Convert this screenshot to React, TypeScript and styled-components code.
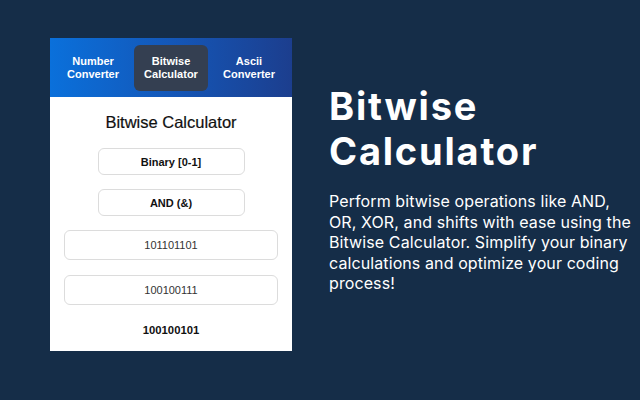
import React from "react";
import styled, { createGlobalStyle } from "styled-components";

const GlobalStyle = createGlobalStyle`
  html, body {
    margin: 0;
    padding: 0;
    background: #152d48;
  }
  * { box-sizing: border-box; }
`;

const Page = styled.div`
  width: 640px;
  height: 400px;
  background: #152d48;
  display: flex;
  align-items: flex-start;
  padding: 38px 0 0 50px;
`;

const Panel = styled.div`
  width: 242px;
  height: 313px;
  background: #ffffff;
  display: flex;
  flex-direction: column;
  font-family: "Liberation Sans", Arial, sans-serif;
`;

const TabBar = styled.div`
  height: 59px;
  background: linear-gradient(90deg, #0a70db 0%, #1457b8 50%, #1c3e8e 100%);
  display: grid;
  grid-template-columns: repeat(3, 1fr);
  align-items: center;
  padding: 0 6px;
  gap: 4px;
`;

const Tab = styled.div<{ $active?: boolean }>`
  height: 46px;
  border-radius: 6px;
  background: ${({ $active }) => ($active ? "#343f51" : "transparent")};
  color: #ffffff;
  font-size: 11px;
  font-weight: bold;
  line-height: 13px;
  text-align: center;
  display: flex;
  align-items: center;
  justify-content: center;
`;

const Body = styled.div`
  flex: 1;
  display: flex;
  flex-direction: column;
  align-items: center;
  padding: 13px 14px 0;
`;

const Title = styled.div`
  font-size: 16.5px;
  color: #111111;
  height: 24px;
  line-height: 24px;
  margin-bottom: 14px;
  -webkit-text-stroke: 0.2px #111111;
`;

const Select = styled.div`
  width: 147px;
  height: 27px;
  border: 1px solid #dcdcdc;
  border-radius: 6px;
  display: flex;
  align-items: center;
  justify-content: center;
  font-size: 11px;
  font-weight: bold;
  color: #111111;
  margin-bottom: 14px;
`;

const Field = styled.div`
  width: 214px;
  height: 30px;
  border: 1px solid #dcdcdc;
  border-radius: 6px;
  display: flex;
  align-items: center;
  justify-content: center;
  font-size: 11px;
  color: #333333;
  margin-bottom: 15px;
`;

const Result = styled.div`
  margin-top: 4px;
  font-size: 11.3px;
  font-weight: bold;
  color: #111111;
`;

const Info = styled.div`
  margin-left: 37px;
  margin-top: 46px;
  color: #ffffff;
  font-family: Inter, "Noto Sans", sans-serif;
`;

const Heading = styled.h1`
  margin: 0;
  font-size: 38px;
  font-weight: 700;
  line-height: 45px;
  letter-spacing: 1.8px;
`;

const Text = styled.p`
  margin: 17px 0 0;
  font-size: 16px;
  line-height: 20.5px;
  font-weight: 400;
  letter-spacing: 0.1px;
  white-space: nowrap;
`;

export default function App() {
  return (
    <>
      <GlobalStyle />
      <Page>
        <Panel>
          <TabBar>
            <Tab>Number<br />Converter</Tab>
            <Tab $active>Bitwise<br />Calculator</Tab>
            <Tab>Ascii<br />Converter</Tab>
          </TabBar>
          <Body>
            <Title>Bitwise Calculator</Title>
            <Select>Binary [0-1]</Select>
            <Select>AND (&amp;)</Select>
            <Field>101101101</Field>
            <Field>100100111</Field>
            <Result>100100101</Result>
          </Body>
        </Panel>
        <Info>
          <Heading>Bitwise<br />Calculator</Heading>
          <Text>
            Perform bitwise operations like AND,<br />
            OR, XOR, and shifts with ease using the<br />
            Bitwise Calculator. Simplify your binary<br />
            calculations and optimize your coding<br />
            process!
          </Text>
        </Info>
      </Page>
    </>
  );
}
